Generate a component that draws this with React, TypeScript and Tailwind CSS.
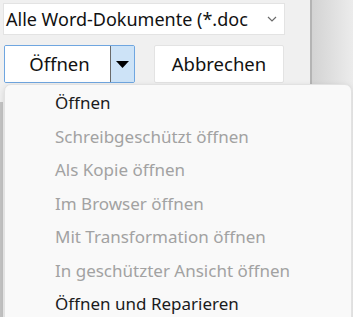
import React from "react";

const items = [
  { label: "Öffnen", enabled: true },
  { label: "Schreibgeschützt öffnen", enabled: false },
  { label: "Als Kopie öffnen", enabled: false },
  { label: "Im Browser öffnen", enabled: false },
  { label: "Mit Transformation öffnen", enabled: false },
  { label: "In geschützter Ansicht öffnen", enabled: false },
  { label: "Öffnen und Reparieren", enabled: true },
];

export default function App() {
  return (
    <div
      className="relative flex w-[353px] h-[317px] overflow-hidden bg-[#f0f0f0]"
      style={{ fontFamily: '"Noto Sans", "Open Sans", sans-serif' }}
    >
      {/* File dialog footer */}
      <div className="flex flex-col w-[310px] shrink-0">
        <div className="ml-[3px] mt-[3px] flex items-center w-[282px] h-[32px] bg-white border border-[#e3e3e3] overflow-hidden">
          <span className="flex-1 pl-[2px] text-[18px] leading-none text-[#111] whitespace-nowrap">
            Alle Word-Dokumente (*.doc
          </span>
          <svg className="mr-[7px]" width="10" height="6" viewBox="0 0 10 6">
            <path d="M1 1 L5 5 L9 1" fill="none" stroke="#6b6b6b" strokeWidth="1.2" />
          </svg>
        </div>

        <div className="mt-[10px] ml-[4px] flex gap-[19px]">
          <div className="flex w-[131px] h-[38px] border border-[#6fa6e0] rounded-[2px] overflow-hidden">
            <div className="flex-1 flex items-center justify-center bg-white text-[18.5px] text-[#111] pl-[4px]">
              Öffnen
            </div>
            <div className="flex items-center justify-center w-[24px] bg-[#cde3f7] border-l border-[#6a6a6a]">
              <svg width="13" height="7" viewBox="0 0 13 7">
                <path d="M0 0 H13 L6.5 7 Z" fill="#000" />
              </svg>
            </div>
          </div>
          <div className="flex items-center justify-center w-[130px] h-[38px] bg-white border border-[#e3e3e3] rounded-[2px] text-[18.5px] text-[#111]">
            Abbrechen
          </div>
        </div>

        <div className="flex-1 mt-[11px] flex">
          <div className="w-[3px] mt-[8px] bg-[#c4c4c4]" />
        </div>
      </div>

      {/* Neighbouring pane */}
      <div className="flex-1 border-l-2 border-[#b4b4b4] bg-gradient-to-r from-[#d3d3d3] to-[#ececec]" />

      {/* Split button menu */}
      <div className="absolute left-[4px] top-[84px] w-[348px] h-[240px] rounded-[7px] bg-[#f9f9f9] border border-[#e2e2e2] shadow-[0_2px_6px_rgba(0,0,0,0.12)] pt-[1px]">
        {items.map((item) => (
          <div
            key={item.label}
            className={`h-[33.5px] flex items-center pl-[50px] text-[17px] whitespace-nowrap ${
              item.enabled ? "text-[#1b1b1b]" : "text-[#a2a2a2]"
            }`}
          >
            {item.label}
          </div>
        ))}
      </div>
    </div>
  );
}
